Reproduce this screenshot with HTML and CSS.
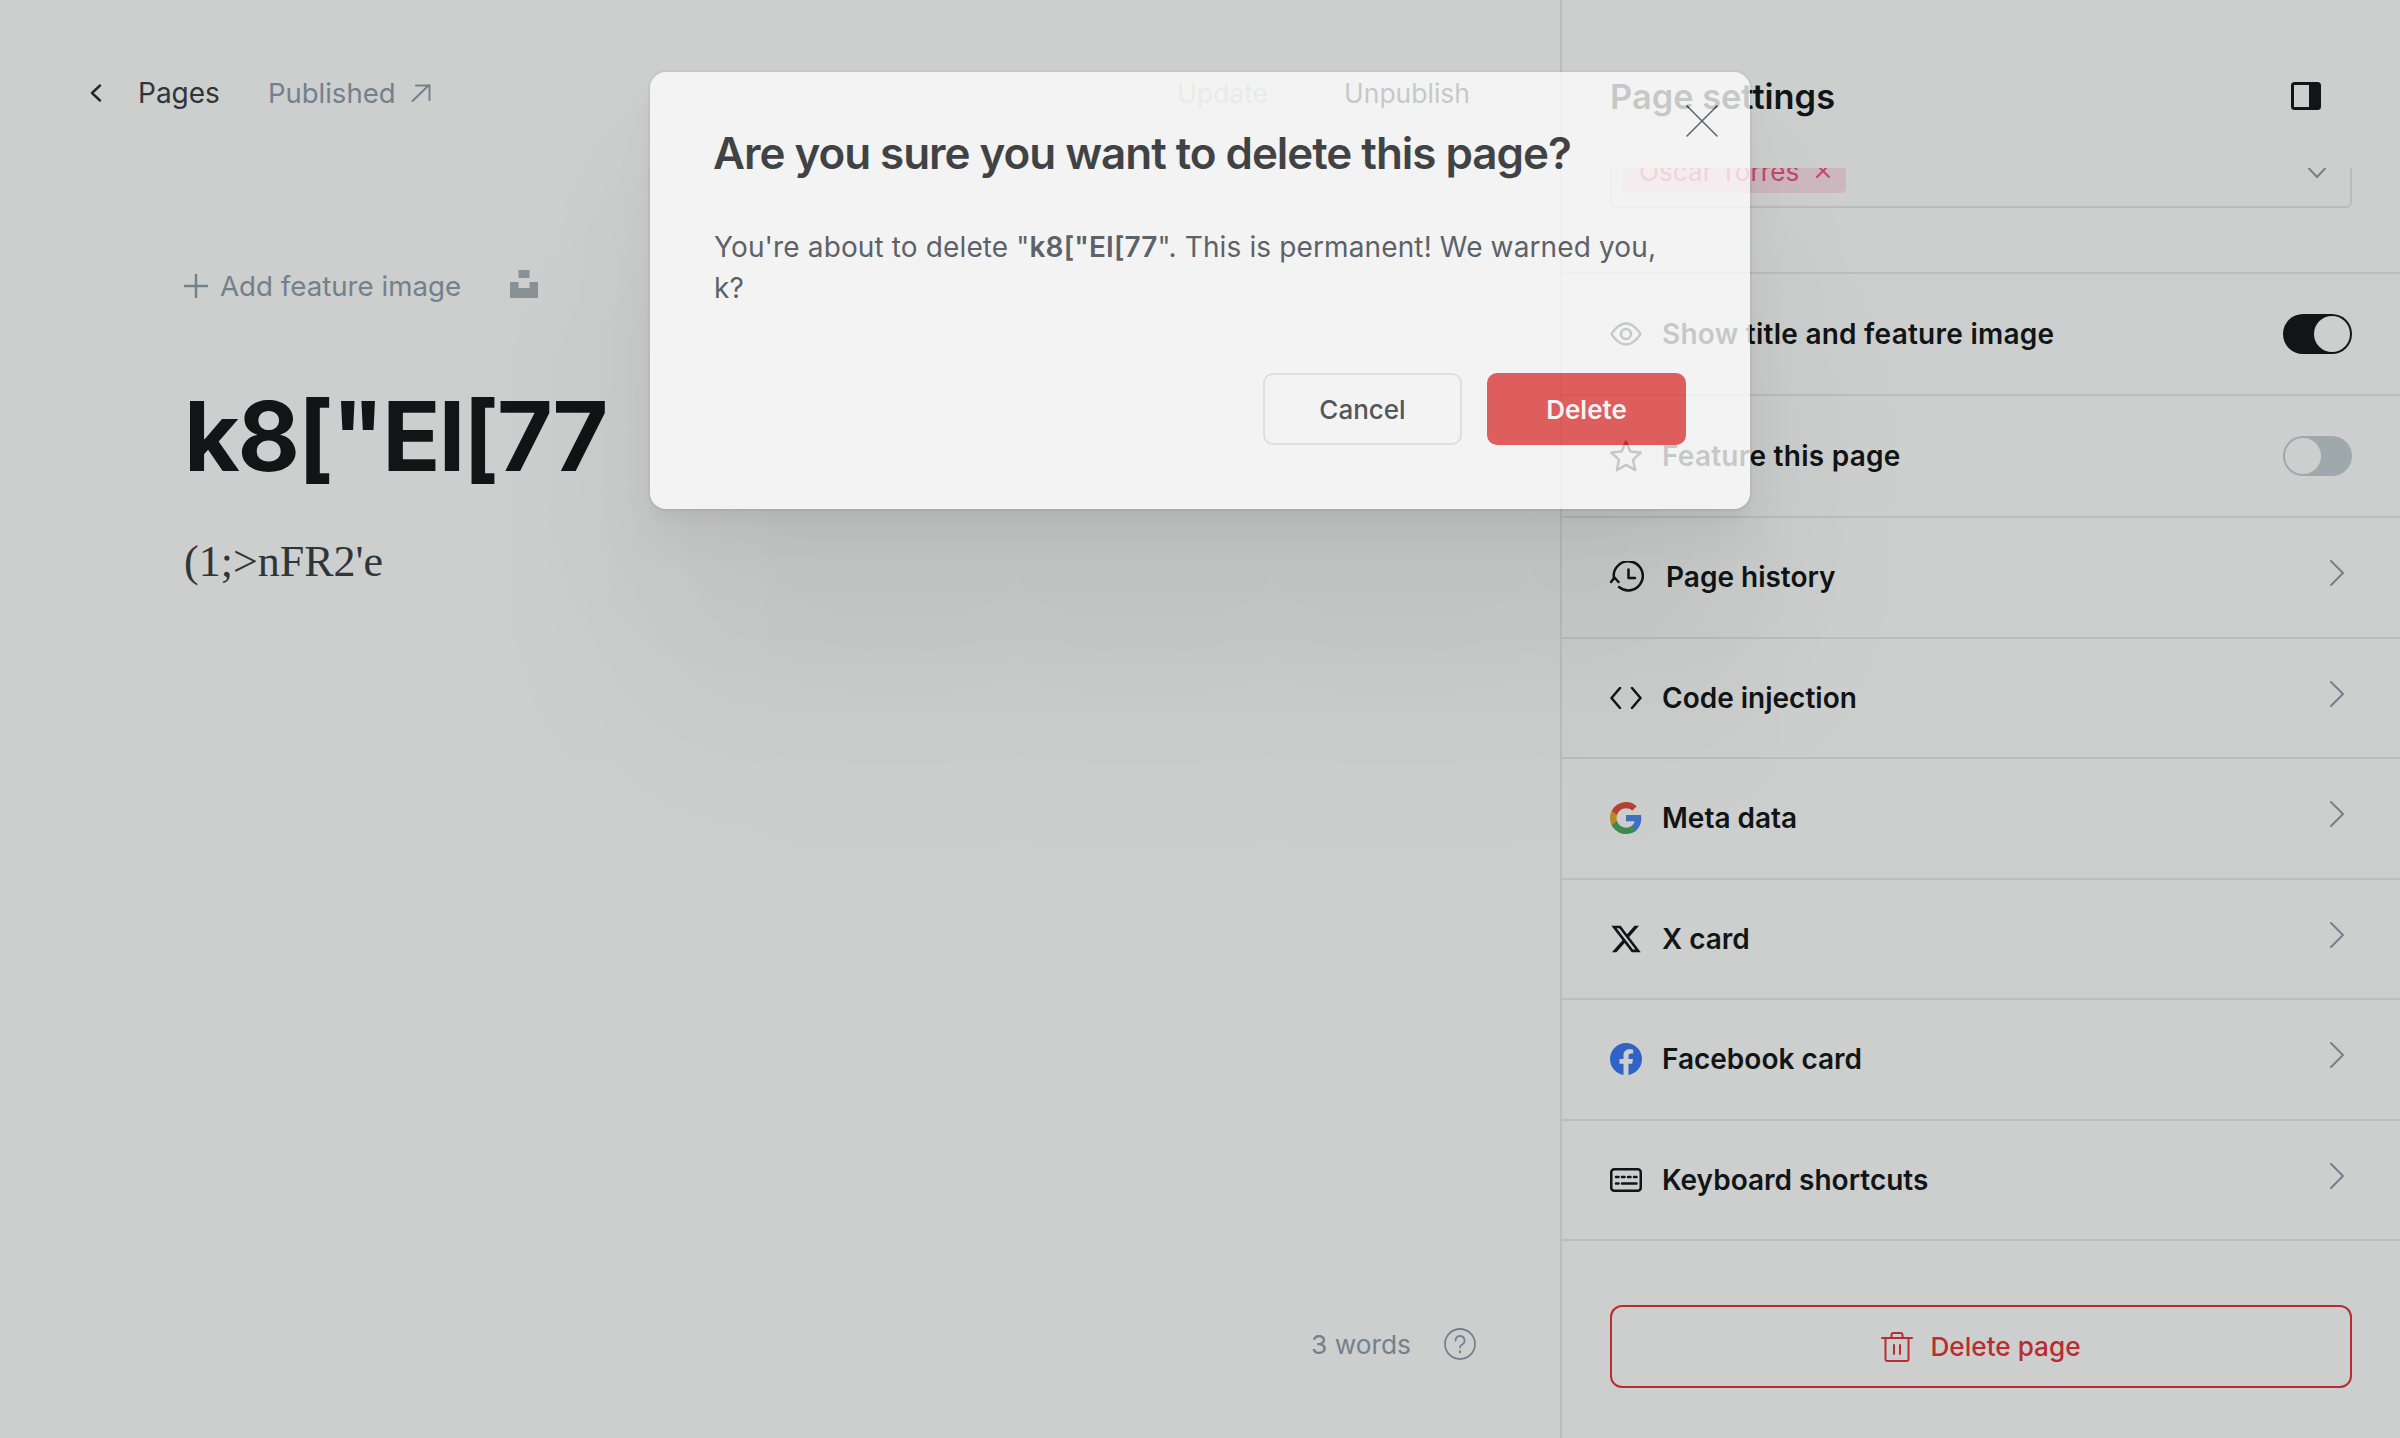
FILE: index.html
```html
<!DOCTYPE html>
<html lang="en">
<head>
<meta charset="utf-8">
<title>Delete page</title>
<link rel="stylesheet" href="styles.css">
</head>
<body>
<div class="app">
  <main class="editor">
    <header class="topbar">
      <svg class="back-icon" viewBox="0 0 12 18"><path d="M10 1.500 2 9l8 7.500"/></svg>
      <span class="crumb">Pages</span>
      <span class="status">Published</span>
      <svg class="arrow-icon" viewBox="0 0 20 18"><path d="M1.500 17 18 1M5 1.500h13.500V16"/></svg>
      <span class="spacer"></span>
      <span class="action action--update">Update</span>
      <span class="action action--unpublish">Unpublish</span>
    </header>
    <section class="content">
      <div class="feature">
        <svg class="plus-icon" viewBox="0 0 24 24"><path d="M12 0v24M0 12h24"/></svg>
        <span class="feature__label">Add feature image</span>
        <svg class="unsplash-icon" viewBox="0 0 28 28"><path d="M8.500 0H19.500V8H8.500zM0 12H8.500V18H19.500V12H28V28H0z"/></svg>
      </div>
      <h1 class="title">k8["EI[77</h1>
      <p class="excerpt">(1;&gt;nFR2'e</p>
    </section>
    <footer class="wordcount">
      <span>3 words</span>
      <svg class="help-icon" viewBox="0 0 32 32"><circle cx="16" cy="16" r="15"/><path d="M11.500 12.500a4.500 4.500 0 1 1 6.600 4c-1.400.8-2.100 1.500-2.100 3"/><path d="M16 23v1.500"/></svg>
    </footer>
  </main>

  <aside class="panel">
    <header class="panel__head">
      <h2 class="panel__title">Page settings</h2>
      <svg class="panel-icon" viewBox="0 0 30 28"><rect x="1.500" y="1.500" width="27" height="25" rx="2"/><path class="panel-icon__fill" d="M18 1.500h8.500a2 2 0 0 1 2 2v21a2 2 0 0 1-2 2H18z"/></svg>
    </header>
    <div class="select">
      <span class="tag">Oscar Torres<svg class="tag__x" viewBox="0 0 16 16"><path d="M2 2l12 12M14 2 2 14"/></svg></span>
      <svg class="select__chev" viewBox="0 0 18 12"><path d="M1 1.500 9 10l8-8.500"/></svg>
    </div>
    <ul class="rows">
      <li class="row row--tall">
        <svg class="icon icon--muted" viewBox="0 0 32 24"><path d="M1.500 12S7.500 1.500 16 1.500 30.500 12 30.500 12 24.500 22.500 16 22.500 1.500 12 1.500 12z"/><circle cx="16" cy="12" r="5"/></svg>
        <span class="row__label">Show title and feature image</span>
        <span class="toggle toggle--on"><span class="toggle__knob"></span></span>
      </li>
      <li class="row row--tall">
        <svg class="icon icon--muted icon--star" viewBox="0 0 32 32"><path d="M16 1.800l4.400 9.600 10.300 1.200-7.600 7.100 2 10.400-9.100-5.200-9.100 5.200 2-10.400-7.600-7.100 10.300-1.200z"/></svg>
        <span class="row__label">Feature this page</span>
        <span class="toggle"><span class="toggle__knob"></span></span>
      </li>
      <li class="row">
        <svg class="icon icon--history" viewBox="0 0 34 32"><path d="M4 17.500A14.500 14.500 0 1 1 9 26"/><path d="M1 21l3.500-4.500 4 4.500"/><path d="M18.500 8.500V17h6.500"/></svg>
        <span class="row__label row__label--wide">Page history</span>
        <svg class="chev" viewBox="0 0 14 26"><path d="M1 1l12 12L1 25"/></svg>
      </li>
      <li class="row">
        <svg class="icon icon--code" viewBox="0 0 32 22"><path d="M10 1 1.500 11 10 21M22 1l8.500 10L22 21"/></svg>
        <span class="row__label">Code injection</span>
        <svg class="chev" viewBox="0 0 14 26"><path d="M1 1l12 12L1 25"/></svg>
      </li>
      <li class="row">
        <svg class="icon icon--fill" viewBox="1 1 22 22"><path fill="#5189f0" d="M22.560 12.250c0-.78-.07-1.530-.2-2.250H12v4.260h5.920c-.26 1.370-1.040 2.530-2.210 3.310v2.770h3.570c2.080-1.920 3.280-4.740 3.280-8.090z"/><path fill="#4ea865" d="M12 23c2.970 0 5.460-.98 7.280-2.660l-3.570-2.770c-.98.66-2.230 1.060-3.710 1.060-2.860 0-5.290-1.930-6.160-4.530H2.180v2.840C3.990 20.530 7.700 23 12 23z"/><path fill="#e3ab2f" d="M5.840 14.090c-.22-.66-.35-1.360-.35-2.090s.13-1.430.35-2.090V7.070H2.180C1.430 8.550 1 10.220 1 12s.43 3.450 1.180 4.930l2.850-2.220.81-.62z"/><path fill="#e3513c" d="M12 5.380c1.620 0 3.060.56 4.210 1.640l3.150-3.150C17.450 2.090 14.970 1 12 1 7.700 1 3.990 3.470 2.180 7.070l3.660 2.840c.87-2.600 3.300-4.530 6.160-4.530z"/></svg>
        <span class="row__label">Meta data</span>
        <svg class="chev" viewBox="0 0 14 26"><path d="M1 1l12 12L1 25"/></svg>
      </li>
      <li class="row">
        <svg class="icon icon--fill icon--x" viewBox="1 2 22 20"><path fill="#15171a" d="M18.244 2.250h3.308l-7.227 8.260 8.502 11.240H16.170l-5.214-6.817L4.990 21.750H1.680l7.730-8.835L1.254 2.250H8.080l4.713 6.231zm-1.161 17.520h1.833L7.084 4.126H5.117z"/></svg>
        <span class="row__label">X card</span>
        <svg class="chev" viewBox="0 0 14 26"><path d="M1 1l12 12L1 25"/></svg>
      </li>
      <li class="row">
        <svg class="icon icon--fill" viewBox="0 0 24 24"><path fill="#3a79f5" d="M24 12.070C24 5.400 18.630 0 12 0S0 5.400 0 12.070c0 6.020 4.390 11.020 10.130 11.930v-8.440H7.080v-3.490h3.050V9.410c0-3.020 1.790-4.690 4.530-4.690 1.310 0 2.690.24 2.690.24v2.970h-1.520c-1.490 0-1.960.93-1.960 1.860v2.280h3.330l-.53 3.490h-2.800V24C19.610 23.090 24 18.090 24 12.070z"/></svg>
        <span class="row__label">Facebook card</span>
        <svg class="chev" viewBox="0 0 14 26"><path d="M1 1l12 12L1 25"/></svg>
      </li>
      <li class="row">
        <svg class="icon icon--keyboard" viewBox="0 0 32 24"><rect x="1.250" y="1.250" width="29.500" height="21.500" rx="3"/><path d="M6 9h2.500M12 9h2.500M18 9h2.500M24 9h2.500M6 15.500h2.500M12 15.500h14.500"/></svg>
        <span class="row__label">Keyboard shortcuts</span>
        <svg class="chev" viewBox="0 0 14 26"><path d="M1 1l12 12L1 25"/></svg>
      </li>
    </ul>
    <button class="delete-page">
      <svg class="trash-icon" viewBox="0 0 32 30"><path d="M1 6h30M4.500 6v21a2 2 0 0 0 2 2h19a2 2 0 0 0 2-2V6M10.500 6V3a2 2 0 0 1 2-2h7a2 2 0 0 1 2 2v3M13 13v9M19 13v9"/></svg>
      <span>Delete page</span>
    </button>
  </aside>
</div>

<div class="backdrop"></div>

<div class="modal">
  <svg class="modal__close" viewBox="0 0 32 32"><path d="M1 1l30 30M31 1 1 31"/></svg>
  <h3 class="modal__title">Are you sure you want to delete this page?</h3>
  <p class="modal__body">You're about to delete "<strong>k8["EI[77</strong>". This is permanent! We warned you, k?</p>
  <div class="modal__actions">
    <button class="btn btn--cancel">Cancel</button>
    <button class="btn btn--delete">Delete</button>
  </div>
</div>
</body>
</html>
```

FILE: styles.css
```css
* { box-sizing: border-box; }
html, body { margin: 0; padding: 0; height: 100%; }
body {
  width: 2400px;
  height: 1438px;
  overflow: hidden;
  position: relative;
  background: #fff;
  font-family: Inter, "Liberation Sans", sans-serif;
  color: #15171a;
}
h1, h2, h3, p, ul { margin: 0; padding: 0; }
ul { list-style: none; }
svg { display: block; flex: none; fill: none; stroke-linecap: round; stroke-linejoin: round; }

.app { display: flex; height: 1438px; }

/* editor */
.editor { flex: 0 0 1560px; display: flex; flex-direction: column; }
.topbar {
  display: flex;
  align-items: center;
  height: 186px;
  padding: 0 90px 0 90px;
  font-size: 28px;
}
.back-icon { width: 12px; height: 18px; stroke: #2c3035; stroke-width: 2.400; margin-right: 36px; }
.crumb { color: #394047; }
.status { color: #8f9eae; margin-left: 48px; font-size: 27.500px; }
.arrow-icon { width: 20px; height: 18px; stroke: #8f9eae; stroke-width: 2; margin-left: 15px; }
.spacer { flex: 1; }
.action { font-size: 26.500px; }
.action--update { color: #b6e1b4; margin-right: 76px; }
.action--unpublish { color: #15171a; }

.content { padding: 0 0 0 184px; flex: 1; }
.feature { display: flex; align-items: center; height: 40px; margin-top: 80px; font-size: 27.700px; color: #8f9eae; }
.plus-icon { width: 24px; height: 24px; stroke: #8f9eae; stroke-width: 2.500; margin-right: 12px; }
.feature__label { margin-right: 49px; }
.unsplash-icon { width: 28px; height: 28px; fill: #a9b2b9; margin-top: -4px; }
.title { font-size: 96px; font-weight: 700; line-height: 120px; letter-spacing: -2.250px; margin-top: 70px; color: #15171a; }
.excerpt { font-family: "Liberation Serif", serif; font-size: 44px; line-height: 56px; margin-top: 38px; color: #394047; }

.wordcount {
  display: flex;
  align-items: center;
  justify-content: flex-end;
  height: 188px;
  padding: 0 84px 0 0;
  font-size: 26.300px;
  color: #8f9eae;
}
.help-icon { width: 32px; height: 32px; stroke: #8f9eae; stroke-width: 1.800; margin-left: 33px; }

/* panel */
.panel { flex: 1; display: flex; flex-direction: column; border-left: 2px solid #eaeaea; overflow: hidden; }
.panel__head { display: flex; justify-content: space-between; align-items: flex-start; height: 168px; padding: 73px 79px 0 48px; flex: none; }
.panel__title { font-size: 34.400px; font-weight: 600; line-height: 48px; }
.panel-icon { width: 30px; height: 28px; stroke: #15171a; stroke-width: 3; margin-top: 9px; }
.panel-icon__fill { fill: #15171a; stroke: none; }

.select {
  display: flex;
  justify-content: space-between;
  align-items: flex-end;
  flex: none;
  height: 40px;
  margin: 0 48px 0 48px;
  padding: 0 24px 13px 11px;
  border: 2px solid #e6e8e7;
  border-top: 0;
  border-radius: 0 0 6px 6px;
  overflow: hidden;
}
.tag {
  display: flex;
  align-items: center;
  flex: none;
  height: 44px;
  padding: 0 15px 0 16px;
  border-radius: 5px;
  background: #ffe1ec;
  color: #f0567f;
  font-size: 26.200px;
}
.tag__x { width: 16px; height: 16px; stroke: #f0567f; stroke-width: 2; margin-left: 16px; }
.select__chev { width: 18px; height: 12px; stroke: #8f9eae; stroke-width: 2; margin-bottom: 14px; }

.rows { margin-top: 64px; border-bottom: 2px solid #e8eaea; flex: none; }
.row {
  display: flex;
  align-items: center;
  height: 120.500px;
  padding: 0 48px;
  border-top: 2px solid #e8eaea;
  font-size: 28px;
  font-weight: 600;
}
.row--tall { height: 122px; letter-spacing: .250px; }
.row__label { flex: 1; margin-left: 20px; }
.row__label--wide { margin-left: 22px; }
.icon { width: 32px; height: 32px; stroke: #15171a; stroke-width: 2.500; }
.icon--muted { height: 24px; stroke-width: 2.500; }
.icon--star { height: 32px; }
.icon--history { width: 34px; }
.icon--code { height: 22px; }
.icon--fill { stroke: none; }
.icon--x { width: 30px; height: 28px; margin: 0 1px; }
.icon--keyboard { height: 24px; }
.chev { width: 14px; height: 26px; stroke: #8f9eae; stroke-width: 2; margin: 0 8px 8px 0; }

.toggle { display: block; flex: none; width: 69px; height: 40px; padding: 2px; border-radius: 20px; background: #c6cfd2; }
.toggle__knob { display: block; width: 36px; height: 36px; border-radius: 50%; background: #fff; }
.toggle--on { background: #15171a; padding-left: 31px; }

.delete-page {
  display: flex;
  align-items: center;
  justify-content: center;
  flex: none;
  height: 83px;
  margin: 64px 48px 0 48px;
  border: 2px solid #e6343a;
  border-radius: 12px;
  background: transparent;
  color: #e6343a;
  font: 500 26.200px Inter, sans-serif;
}
.trash-icon { width: 32px; height: 30px; stroke: #e6343a; stroke-width: 2; margin-right: 17px; }

/* overlay */
.backdrop { position: absolute; inset: 0; background: rgba(5, 15, 10, .2); }
.modal {
  position: absolute;
  left: 650px;
  top: 72px;
  width: 1100px;
  height: 437px;
  padding: 53px 64px 0 63px;
  background: #fff;
  border-radius: 16px;
  opacity: .76;
  box-shadow: 0 0 0 2px rgba(0,0,0,.04), 0 2px 3px rgba(0,0,0,.03), 0 10px 12px rgba(0,0,0,.04), 0 30px 40px rgba(0,0,0,.05), 0 100px 140px rgba(0,0,0,.05), 0 200px 220px rgba(0,0,0,.05);
}
.modal__close { position: absolute; right: 32px; top: 33px; width: 32px; height: 32px; stroke: #394047; stroke-width: 1.500; }
.modal__title { font-size: 44px; font-weight: 600; line-height: 56px; letter-spacing: -1.050px; color: #15171a; white-space: nowrap; }
.modal__body { margin-top: 46px; margin-left: 1px; font-size: 28px; line-height: 41px; letter-spacing: .130px; color: #394047; }
.modal__body strong { font-weight: 600; }
.modal__actions { display: flex; justify-content: flex-end; gap: 25px; margin-top: 64px; }
.btn { width: 199px; height: 72px; border-radius: 10px; font: 500 26px Inter, sans-serif; }
.btn--cancel { background: #fff; border: 2px solid #e2e5e4; color: #2d3136; }
.btn--delete { background: #e43a3a; border: 0; color: #fff; font-weight: 600; }
```
